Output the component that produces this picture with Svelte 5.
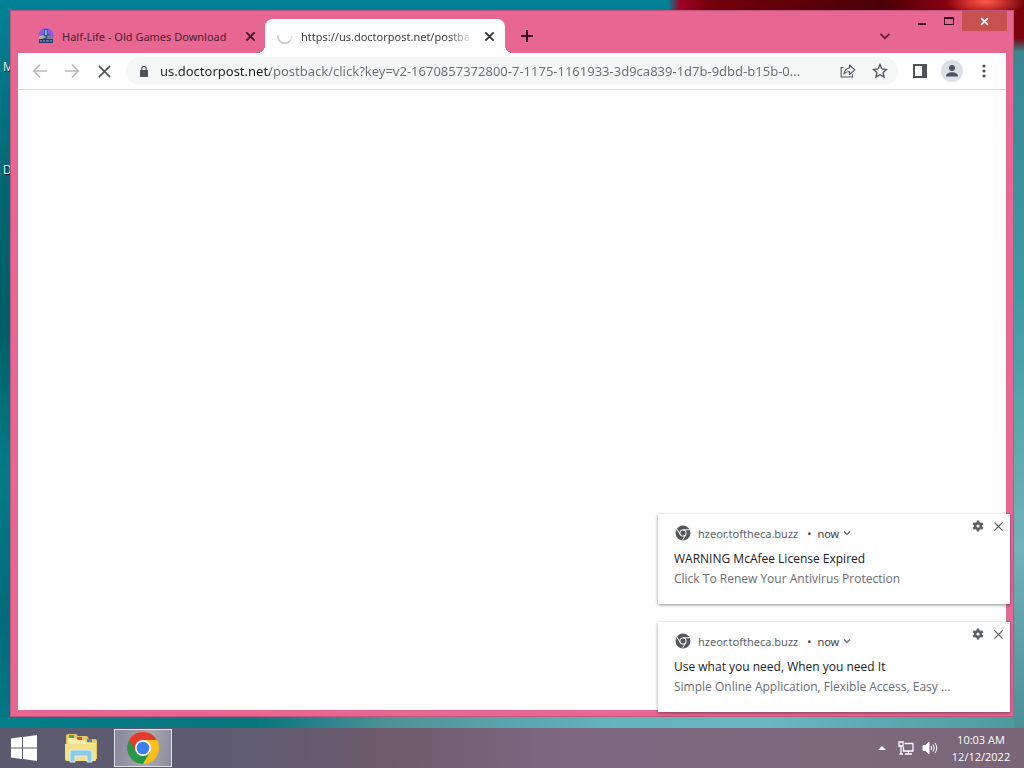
<script lang="ts">
  interface Notice {
    id: number;
    origin: string;
    title: string;
    body: string;
  }

  let url = $state('us.doctorpost.net/postback/click?key=v2-1670857372800-7-1175-1161933-3d9ca839-1d7b-9dbd-b15b-0...');

  let notices = $state<Notice[]>([
    {
      id: 1,
      origin: 'hzeor.toftheca.buzz',
      title: 'WARNING McAfee License Expired',
      body: 'Click To Renew Your Antivirus Protection',
    },
    {
      id: 2,
      origin: 'hzeor.toftheca.buzz',
      title: 'Use what you need, When you need It',
      body: 'Simple Online Application, Flexible Access, Easy ...',
    },
  ]);

  function dismiss(id: number) {
    notices = notices.filter((n) => n.id !== id);
  }
</script>

{#snippet cross(size: number, stroke: number)}
  <svg width={size} height={size} viewBox="0 0 12 12" fill="none" stroke="currentColor" stroke-width={stroke}>
    <path d="M1.5 1.5l9 9M10.5 1.5l-9 9" />
  </svg>
{/snippet}

{#snippet chevron(size: number)}
  <svg width={size} height={size} viewBox="0 0 12 12" fill="none" stroke="currentColor" stroke-width="1.8">
    <path d="M1.5 3.8L6 8.2l4.5-4.4" />
  </svg>
{/snippet}

<div class="screen">
  <main class="desktop">
    <span class="shortcut first">M</span>
    <span class="shortcut second">D</span>

    <div class="window">
      <header class="titlebar">
        <div class="tabs">
          <div class="tab">
            <svg class="favicon" width="16" height="16" viewBox="0 0 16 16">
              <circle cx="8" cy="7.500" r="7.500" fill="#8a5be8" />
              <path d="M6 1h4v5l4 2v3H2V8l4-2z" fill="#34558f" />
              <path d="M7 2h2v5H7z" fill="#7fb4e8" />
              <path d="M1 8l4-1 3 2-4 2H1z" fill="#b4a99a" />
              <path d="M9 8l5-1 1 4H9z" fill="#777d8e" />
              <path d="M1 11h14v4H1z" fill="#243a6b" />
              <path d="M2 13h2m1 0h2m1 0h3m1 0h2" stroke="#a9b5d0" />
            </svg>
            <span class="tab-title">Half-Life - Old Games Download</span>
            <button class="tab-close" aria-label="Close tab">{@render cross(11, 2)}</button>
          </div>
          <div class="tab active">
            <svg class="favicon" width="16" height="16" viewBox="0 0 16 16" fill="none" stroke-width="1.6">
              <path d="M1 7a7 7 0 0 0 12 6" stroke="#c3c9d2" />
              <path d="M13 13a7 7 0 0 0 2-5" stroke="#dde1e6" />
            </svg>
            <span class="tab-title fade">https://us.doctorpost.net/postba</span>
            <button class="tab-close" aria-label="Close tab">{@render cross(11, 2)}</button>
          </div>
          <button class="new-tab" aria-label="New tab">
            <svg width="12" height="12" viewBox="0 0 12 12" stroke="currentColor" stroke-width="2">
              <path d="M6 0v12M0 6h12" />
            </svg>
          </button>
        </div>
        <button class="tab-search" aria-label="Search tabs">{@render chevron(12)}</button>
        <div class="controls">
          <button aria-label="Minimize">
            <svg width="10" height="10" viewBox="0 0 10 10"><path d="M1 7h8v2H1z" fill="currentColor" /></svg>
          </button>
          <button aria-label="Maximize">
            <svg width="10" height="10" viewBox="0 0 10 10" fill="currentColor">
              <path d="M0 1h10v8H0zM1 3v5h8V3z" fill-rule="evenodd" />
            </svg>
          </button>
          <button class="close" aria-label="Close">{@render cross(9, 2.2)}</button>
        </div>
      </header>

      <nav class="toolbar">
        <button class="tool dim" aria-label="Back">
          <svg width="16" height="16" viewBox="0 0 16 16" fill="none" stroke="currentColor" stroke-width="1.6">
            <path d="M15 8H2M8 1.5L1.7 8 8 14.5" />
          </svg>
        </button>
        <button class="tool dim" aria-label="Forward">
          <svg width="16" height="16" viewBox="0 0 16 16" fill="none" stroke="currentColor" stroke-width="1.6">
            <path d="M1 8h13M8 1.5L14.3 8 8 14.5" />
          </svg>
        </button>
        <button class="tool" aria-label="Stop loading">{@render cross(15, 1.3)}</button>

        <div class="omnibox">
          <svg class="lock" width="8" height="11" viewBox="0 0 8 11">
            <path d="M0 4h8v7H0z" fill="#4f5358" />
            <path d="M1.800 4.500V2.800a2.200 2.100 0 0 1 4.400 0v1.700" fill="none" stroke="#4f5358" stroke-width="1.200" />
          </svg>
          <input type="text" aria-label="Address" spellcheck="false" bind:value={url} />
          <button class="tool" aria-label="Share">
            <svg width="16" height="16" viewBox="0 0 16 16" fill="none" stroke="currentColor" stroke-width="1.1">
              <path d="M3.500 4.500H1.200V14h11.300v-2.500" />
              <path d="M9.500 5V2l5.300 4.800-5.300 4.700V8.500C7 8.500 5.300 9.300 4 11c.3-3.500 2-5.500 5.500-6z" stroke-linejoin="round" />
            </svg>
          </button>
          <button class="tool" aria-label="Bookmark this tab">
            <svg width="16" height="16" viewBox="0 0 16 16" fill="none" stroke="currentColor" stroke-width="1.3">
              <path d="M8 1.600l1.900 4.300 4.700.5-3.500 3.100 1 4.600L8 11.700l-4.100 2.400 1-4.600L1.400 6.400l4.700-.5z" />
            </svg>
          </button>
        </div>

        <button class="tool" aria-label="Side panel">
          <svg width="14" height="14" viewBox="0 0 14 14" fill="currentColor">
            <path d="M0 0h14v14H0zM2 2v10h7V2z" fill-rule="evenodd" />
          </svg>
        </button>
        <button class="tool" aria-label="Profile">
          <svg width="22" height="22" viewBox="0 0 22 22">
            <circle cx="11" cy="11" r="11" fill="#dadfe8" />
            <circle cx="11" cy="8" r="3" fill="#4b5365" />
            <path d="M5 16.500c0-3 3-4.300 6-4.300s6 1.300 6 4.300z" fill="#4b5365" />
          </svg>
        </button>
        <button class="tool" aria-label="Menu">
          <svg width="4" height="14" viewBox="0 0 4 14" fill="currentColor">
            <circle cx="2" cy="2" r="1.600" /><circle cx="2" cy="7" r="1.600" /><circle cx="2" cy="12" r="1.600" />
          </svg>
        </button>
      </nav>

      <section class="page" aria-label="Page"></section>
    </div>
  </main>

  <aside class="notices">
    {#each notices as n (n.id)}
      <article class="notice">
        <div class="notice-head">
          <svg width="16" height="16" viewBox="0 0 16 16">
            <circle cx="8" cy="8" r="7.500" fill="#55585c" />
            <circle cx="8" cy="8" r="3.200" fill="none" stroke="#fff" />
            <path d="M8 4.800h6.500M5.200 9.600L2 4.200M10.800 9.600L7.600 15" stroke="#fff" />
          </svg>
          <span class="origin">{n.origin}</span>
          <span class="dot">•</span>
          <span class="when">now</span>
          <button class="expand" aria-label="Expand">{@render chevron(8)}</button>
        </div>
        <h2>{n.title}</h2>
        <p>{n.body}</p>
        <div class="notice-actions">
          <button aria-label="Notification settings">
            <svg width="12" height="12" viewBox="0 0 12 12">
              <circle cx="6" cy="6" r="2.800" fill="none" stroke="currentColor" stroke-width="2.400" />
              <path d="M6 .5v2M6 9.500v2M1.200 3.300L3 4.300M9 7.700l1.800 1M1.200 8.700L3 7.700M9 4.300l1.800-1" stroke="currentColor" stroke-width="2.600" />
            </svg>
          </button>
          <button aria-label="Dismiss" onclick={() => dismiss(n.id)}>{@render cross(11, 1.4)}</button>
        </div>
      </article>
    {/each}
  </aside>

  <footer class="taskbar">
    <button class="start" aria-label="Start">
      <svg width="26" height="26" viewBox="0 0 26 26" fill="#fff">
        <path d="M0 3.600L11 2v10.500H0zM12 1.900L26 0v12.500H12zM0 13.500h11V24L0 22.400zM12 13.500h14V26l-14-1.900z" />
      </svg>
    </button>
    <button class="task" aria-label="File Explorer">
      <svg width="34" height="30" viewBox="0 0 34 30">
        <path d="M2 3q0-2 2-2h8l2 2h9l2 3h6q2 0 2 2v18H2z" fill="#e3c766" />
        <path d="M5 2h5v3H5z" fill="#4fa83d" />
        <path d="M13 4h5v3h-5z" fill="#d6552f" />
        <path d="M23 6h5v3h-5z" fill="#4a86c8" />
        <path d="M4 5h8l2 2h7l2 3h9v16H3z" fill="#f7ecae" />
        <path d="M1 11h31v16q0 1-1 1H3q-2 0-2-2z" fill="#f1df8a" />
        <path d="M6 29V20q0-3 3-3h16q3 0 3 3v9h-5v-6H11v6z" fill="#8cc9e6" stroke="#d5f0fa" />
      </svg>
    </button>
    <button class="task running" aria-label="Google Chrome">
      <svg width="32" height="32" viewBox="0 0 32 32">
        <circle cx="16" cy="16" r="16" fill="#fbc116" />
        <path d="M16 16L2.140 8A16 16 0 0 0 16 32l7-12z" fill="#279847" />
        <path d="M2.140 8A16 16 0 0 1 29.860 8H16L9 20z" fill="#e33b2e" />
        <circle cx="16" cy="16" r="8" fill="#fff" />
        <circle cx="16" cy="16" r="6.300" fill="#3b7ded" />
      </svg>
    </button>
    <div class="tray">
      <button aria-label="Show hidden icons">
        <svg width="8" height="4" viewBox="0 0 8 4" fill="#fff"><path d="M4 0l4 4H0z" /></svg>
      </button>
      <button aria-label="Network">
        <svg width="16" height="14" viewBox="0 0 16 14" fill="none" stroke="#fff" stroke-width="1.300">
          <path d="M1 1h4v4H1zM3 5v8M1.500 13H5M6.500 2.500H15V10H5.500V6M10.500 10v3M7 13h7" />
        </svg>
      </button>
      <button aria-label="Volume">
        <svg width="16" height="14" viewBox="0 0 16 14" fill="none" stroke="#fff">
          <path d="M1 4.500h2.500L7 1v12L3.500 9.500H1z" fill="#fff" />
          <path d="M9 5q1.500 2 0 4M11 3.500q2.500 3.500 0 7M13 2q3.500 5 0 10" />
        </svg>
      </button>
      <time class="clock" datetime="2022-12-12T10:03">
        <span>10:03 AM</span>
        <span>12/12/2022</span>
      </time>
    </div>
  </footer>
</div>

<style>
  :global(body) { margin: 0; }

  .screen {
    position: relative;
    display: flex;
    flex-direction: column;
    height: 100vh;
    overflow: hidden;
    font-family: "Open Sans", "Noto Sans", sans-serif;
    font-size: 12px;
    color: #202124;
  }

  button {
    display: flex;
    align-items: center;
    justify-content: center;
    padding: 0;
    border: 0;
    background: none;
    color: inherit;
    font: inherit;
  }
  svg { flex-shrink: 0; }

  .desktop {
    position: relative;
    flex: 1;
    display: flex;
    min-height: 0;
    padding: 10px 10px 11px;
    background:
      radial-gradient(ellipse 40px 14px at 318px 2px, #ff5a48, rgba(255, 60, 50, 0)) right top / 356px 10px no-repeat,
      linear-gradient(90deg, rgba(110, 0, 8, 0), #a00024 12px, #74000b 40px, #4a0008 60%, #9c0010 85%, #6d000c) right top / 356px 10px no-repeat,
      linear-gradient(#7a000c 38px, rgba(109, 0, 12, 0)) right top / 10px 52px no-repeat,
      linear-gradient(#38838f, #3d9aa2 40%, #72b2ba 75%, #4c8f96) right top / 10px 100% no-repeat,
      linear-gradient(90deg, #007f8b, #08757c 25%, #4f9199 38%, #65b4bd 60%, #6bb5bf 75%, #4c9a9f) left bottom / 100% 11px no-repeat,
      linear-gradient(#018296, #006873 25%, #005e68 45%, #007d87 65%, #006a79 85%, #007a86);
  }

  .shortcut {
    position: absolute;
    left: 3px;
    color: #fff;
    text-shadow: 1px 1px 1px #000;
  }
  .first { top: 58px; }
  .second { top: 161px; }

  .window {
    position: relative;
    flex: 1;
    display: flex;
    flex-direction: column;
    box-sizing: border-box;
    min-width: 0;
    padding: 0 7px 6px;
    border: 1px solid #c0557d;
    background: #e86692;
  }

  .titlebar { display: flex; height: 42px; }
  .tabs {
    flex: 1;
    display: flex;
    align-items: flex-end;
    min-width: 0;
    padding-left: 7px;
  }
  .tab {
    display: flex;
    align-items: center;
    box-sizing: border-box;
    width: 240px;
    height: 34px;
    padding: 0 7px 0 13px;
    gap: 8px;
    color: #4a2030;
  }
  .tab.active {
    position: relative;
    padding: 0 8px 0 12px;
    border-radius: 8px 8px 0 0;
    background: #fff;
    color: #3c4043;
  }
  .tab.active::before,
  .tab.active::after {
    content: '';
    position: absolute;
    bottom: 0;
    width: 8px;
    height: 8px;
  }
  .tab.active::before { right: 100%; background: radial-gradient(circle at 0 0, transparent 8px, #fff 8px); }
  .tab.active::after { left: 100%; background: radial-gradient(circle at 100% 0, transparent 8px, #fff 8px); }
  .tab-title {
    flex: 1;
    min-width: 0;
    font-family: "Noto Sans", sans-serif;
    font-size: 11px;
    white-space: nowrap;
  }
  .fade { mask-image: linear-gradient(90deg, #000 85%, transparent); }
  .tab-close { width: 16px; height: 16px; color: #3a1a26; }
  .active .tab-close { color: #303235; }
  .new-tab { width: 28px; height: 34px; margin-left: 8px; color: #35101e; }
  .tab-search { align-self: flex-end; width: 28px; height: 34px; color: #6d1a38; }

  .controls { display: flex; align-items: flex-start; margin: 0 -1px 0 9px; color: #35101e; }
  .controls button { width: 27px; height: 20px; }
  .controls .close { width: 45px; background: #c75050; color: #fff; }

  .toolbar {
    display: flex;
    align-items: center;
    gap: 4px;
    height: 36px;
    padding: 0 8px;
    border-bottom: 1px solid #d9dbde;
    background: #fff;
  }
  .tool { flex-shrink: 0; width: 28px; height: 28px; color: #4f5358; }
  .dim { color: #b5b7ba; }
  .omnibox {
    flex: 1;
    display: flex;
    align-items: center;
    gap: 4px;
    min-width: 0;
    height: 28px;
    margin: 0 4px;
    padding: 0 4px 0 14px;
    border-radius: 14px;
    background: #f5f7f7;
  }
  .lock { margin-right: 8px; }
  /* the host is dark, the rest of the address is grey */
  input {
    flex: 1;
    min-width: 0;
    padding: 0;
    border: 0;
    outline: 0;
    background: linear-gradient(90deg, #202124 110px, #6a6e73 110px);
    background-clip: text;
    color: transparent;
    font-family: "Noto Sans", sans-serif;
    font-size: 13px;
    text-overflow: ellipsis;
  }

  .page { flex: 1; background: #fff; }

  .notices {
    position: absolute;
    right: 14px;
    bottom: 56px;
    display: flex;
    flex-direction: column;
    gap: 18px;
    width: 352px;
  }
  .notice {
    position: relative;
    box-sizing: border-box;
    height: 90px;
    padding: 9px 16px;
    background: #fff;
    box-shadow: 0 1px 3px rgba(0, 0, 0, 0.45);
  }
  .notice-head {
    display: flex;
    align-items: center;
    height: 20px;
    padding-left: 1px;
    color: #5f6368;
    font-family: "Noto Sans", sans-serif;
    font-size: 11px;
  }
  .origin { margin-left: 7px; }
  .dot { margin: 0 6px 0 9px; color: #3c4043; }
  .when { color: #3c4043; }
  .expand { width: 16px; height: 16px; }
  .notice h2,
  .notice p {
    margin: 0;
    overflow: hidden;
    font-size: 12px;
    font-weight: 400;
    line-height: 20px;
    white-space: nowrap;
    text-overflow: ellipsis;
  }
  .notice h2 { margin-top: 6px; }
  .notice p { color: #6b6e72; }
  .notice-actions {
    position: absolute;
    top: 2px;
    right: 2px;
    display: flex;
    color: #5a5d61;
  }
  .notice-actions button { width: 20px; height: 20px; }

  .taskbar {
    display: flex;
    align-items: center;
    height: 40px;
    background: linear-gradient(90deg, #5b5a6e, #5f5b70 25%, #6e5a6c 38%, #7d6880 55%, #7d6a7d 80%, #786577);
    color: #fff;
  }
  .start { width: 48px; height: 40px; }
  .task { box-sizing: border-box; width: 58px; height: 38px; margin-left: 4px; }
  .running {
    border: 1px solid #e2e1e8;
    background: linear-gradient(100deg, #85859a, #aaa8b2 60%, #8b8a9a);
  }
  .tray { display: flex; align-items: center; margin-left: auto; }
  .tray button { width: 24px; height: 24px; }
  .clock {
    display: flex;
    flex-direction: column;
    width: 78px;
    margin-right: 4px;
    font-size: 11px;
    line-height: 17px;
    text-align: center;
  }
</style>
